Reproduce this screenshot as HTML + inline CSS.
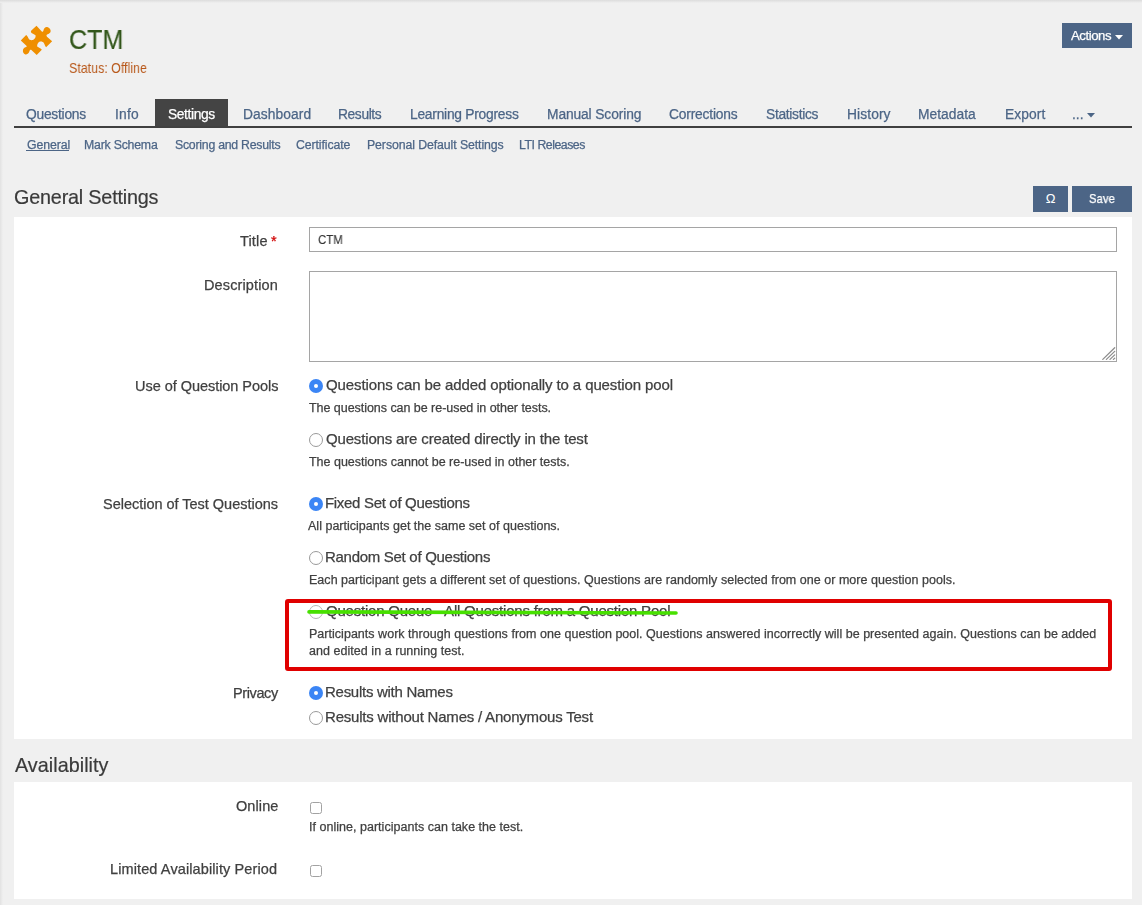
<!DOCTYPE html>
<html><head><meta charset="utf-8">
<style>
html,body{margin:0;padding:0}
body{width:1142px;height:905px;overflow:hidden;background:#f0f0f0;position:relative;font-family:"Liberation Sans",sans-serif}
.a{position:absolute}
.t{position:absolute;white-space:nowrap;will-change:transform;font-family:"Liberation Sans",sans-serif;-webkit-text-stroke:0.25px currentColor}
.t i{display:inline-block;width:0;height:0}
.btn{position:absolute;background:#4c6586}
.radio{position:absolute;width:12px;height:12px;border:1px solid #9a9a9a;border-radius:50%;background:#fff}
.radio.on{width:14px;height:14px;border:0;background:#3b85f5}
.radio.on:after{content:"";position:absolute;left:5px;top:5px;width:4px;height:4px;border-radius:50%;background:#fff}
.cb{position:absolute;width:10px;height:10px;border:1px solid #a2a2a2;border-radius:2.5px;background:#fff}
</style></head><body>
<!-- inner shadows -->
<div class="a" style="left:0;top:0;width:3px;height:905px;background:linear-gradient(90deg,#e2e2e2,#f0f0f0)"></div>
<div class="a" style="left:0;top:0;width:1142px;height:3px;background:linear-gradient(#dcdcdc,#f0f0f0)"></div>
<!-- puzzle icon -->
<svg class="a" style="left:18px;top:22px" width="38" height="36" viewBox="0 0 38 36">
<path fill="#ef8f00" d="M18.50 3.78 L23.80 9.47 Q24.87 10.43 25.47 8.56 C25.87 5.97 27.46 4.70 29.05 4.97 C31.44 5.57 33.43 7.96 32.43 10.15 C31.64 11.54 30.04 11.94 28.97 12.42 Q27.86 13.33 28.97 14.64 L34.14 19.30 L28.05 25.15 C27.06 23.88 26.66 22.28 25.87 20.89 C24.67 19.10 21.69 18.70 20.10 20.89 C19.10 22.28 18.90 23.88 19.50 24.87 C21.49 25.87 22.88 26.66 23.80 27.66 L18.70 32.95 L13.13 27.86 Q11.94 27.46 11.54 29.05 C10.94 31.44 9.15 32.63 7.36 32.43 C5.57 31.83 4.58 30.24 4.97 27.86 C5.37 26.26 7.16 25.47 8.56 24.87 Q9.15 24.27 8.16 23.48 L2.79 18.50 L8.16 13.05 C9.55 13.93 9.95 15.52 10.74 16.71 C11.94 18.70 15.52 18.70 16.91 16.32 C17.71 15.12 17.71 13.73 17.51 13.13 C15.92 11.94 13.93 11.34 13.13 10.43 Q12.53 9.55 13.33 8.56 Z"/>
</svg>
<!-- actions button -->
<div class="btn" style="left:1062px;top:23px;width:70px;height:25px"></div>
<svg class="a" style="left:1115px;top:35px" width="8" height="5"><path d="M0 0H8L4 4.5Z" fill="#fff"/></svg>
<!-- tabs -->
<div class="a" style="left:155px;top:99px;width:73px;height:28px;background:#444"></div>
<div class="a" style="left:14px;top:126px;width:1118px;height:2px;background:#404040"></div>
<svg class="a" style="left:1087px;top:113px" width="8" height="5"><path d="M0 0H8L4 4.5Z" fill="#4c6586"/></svg>
<div class="a" style="left:26px;top:150px;width:43px;height:1px;background:#4c6586"></div>
<!-- omega / save -->
<div class="btn" style="left:1033px;top:186px;width:35px;height:26px"></div>
<div class="btn" style="left:1072px;top:186px;width:60px;height:26px"></div>
<div class="a" style="left:1033px;top:186px;width:35px;height:26px;color:#fff;font-size:13px;line-height:26px;text-align:center">&#937;</div>
<!-- panels -->
<div class="a" style="left:14px;top:217px;width:1118px;height:522px;background:#fff"></div>
<div class="a" style="left:14px;top:782px;width:1118px;height:117px;background:#fff"></div>
<!-- input/textarea -->
<div class="a" style="left:309px;top:227px;width:806px;height:23px;border:1px solid #a5a5a5;background:#fff"></div>
<div class="a" style="left:309px;top:271px;width:806px;height:89px;border:1px solid #a5a5a5;background:#fff"></div>
<svg class="a" style="left:1102px;top:347px" width="14" height="14"><path d="M0.8 12.4L12.7 0.7M4.4 12.4L12.7 4.4M8 12.4L12.7 7.9M11.4 12.4L12.7 11.2" stroke="#8c8c8c" stroke-width="1.25" stroke-linecap="round"/></svg>
<!-- radios -->
<div class="radio on" style="left:309px;top:379px"></div>
<div class="radio" style="left:309px;top:433px"></div>
<div class="radio on" style="left:309px;top:497px"></div>
<div class="radio" style="left:309px;top:551px"></div>
<div class="radio" style="left:309px;top:605px;border-color:#b5b5b5"></div>
<div class="radio on" style="left:309px;top:686px"></div>
<div class="radio" style="left:309px;top:711px"></div>
<!-- checkboxes -->
<div class="cb" style="left:310px;top:802px"></div>
<div class="cb" style="left:310px;top:865px"></div>
<div class="t" style="left:68.88px;top:23.20px;font-size:27.4px;line-height:33px;color:#32561a;letter-spacing:0.000px;-webkit-text-stroke:0.2px;transform:scaleX(0.9166);transform-origin:0 0;">CTM</div>
<div class="t" style="left:69.30px;top:60.20px;font-size:14.2px;line-height:17px;color:#b8581a;letter-spacing:0.000px;-webkit-text-stroke:0;transform:scaleX(0.8768);transform-origin:0 0;">Status: Offline</div>
<div class="t" style="left:26.40px;top:106.21px;font-size:13.8px;line-height:17px;color:#4c6586;letter-spacing:-0.240px;">Questions</div>
<div class="t" style="left:114.70px;top:106.21px;font-size:13.8px;line-height:17px;color:#4c6586;letter-spacing:0.187px;">Info</div>
<div class="t" style="left:242.70px;top:106.21px;font-size:13.8px;line-height:17px;color:#4c6586;letter-spacing:0.072px;">Dashboard</div>
<div class="t" style="left:338.00px;top:106.21px;font-size:13.8px;line-height:17px;color:#4c6586;letter-spacing:-0.384px;">Results</div>
<div class="t" style="left:409.50px;top:106.21px;font-size:13.8px;line-height:17px;color:#4c6586;letter-spacing:-0.246px;">Learning Progress</div>
<div class="t" style="left:546.60px;top:106.21px;font-size:13.8px;line-height:17px;color:#4c6586;letter-spacing:-0.115px;">Manual Scoring</div>
<div class="t" style="left:669.20px;top:106.21px;font-size:13.8px;line-height:17px;color:#4c6586;letter-spacing:-0.184px;">Corrections</div>
<div class="t" style="left:766.40px;top:106.21px;font-size:13.8px;line-height:17px;color:#4c6586;letter-spacing:-0.300px;">Statistics</div>
<div class="t" style="left:847.40px;top:106.21px;font-size:13.8px;line-height:17px;color:#4c6586;letter-spacing:0.095px;">History</div>
<div class="t" style="left:918.30px;top:106.21px;font-size:13.8px;line-height:17px;color:#4c6586;letter-spacing:0.021px;">Metadata</div>
<div class="t" style="left:1004.50px;top:106.21px;font-size:13.8px;line-height:17px;color:#4c6586;letter-spacing:0.072px;">Export</div>
<div class="t" style="left:1072.00px;top:106.21px;font-size:13.8px;line-height:17px;color:#4c6586;letter-spacing:0.017px;">...</div>
<div class="t" style="left:167.60px;top:106.21px;font-size:13.8px;line-height:17px;color:#ffffff;letter-spacing:-0.379px;">Settings</div>
<div class="t" style="left:26.50px;top:137.60px;font-size:12.3px;line-height:15px;color:#4c6586;letter-spacing:-0.103px;">General</div>
<div class="t" style="left:83.90px;top:137.60px;font-size:12.3px;line-height:15px;color:#4c6586;letter-spacing:-0.211px;">Mark Schema</div>
<div class="t" style="left:174.50px;top:137.60px;font-size:12.3px;line-height:15px;color:#4c6586;letter-spacing:-0.244px;">Scoring and Results</div>
<div class="t" style="left:296.30px;top:137.60px;font-size:12.3px;line-height:15px;color:#4c6586;letter-spacing:-0.092px;">Certificate</div>
<div class="t" style="left:366.70px;top:137.60px;font-size:12.3px;line-height:15px;color:#4c6586;letter-spacing:-0.084px;">Personal Default Settings</div>
<div class="t" style="left:518.60px;top:137.60px;font-size:12.3px;line-height:15px;color:#4c6586;letter-spacing:-0.472px;">LTI Releases</div>
<div class="t" style="left:13.70px;top:184.80px;font-size:19.8px;line-height:24px;color:#3a3a3a;letter-spacing:-0.190px;-webkit-text-stroke:0.2px;">General Settings</div>
<div class="t" style="left:14.50px;top:752.51px;font-size:19.8px;line-height:24px;color:#3a3a3a;letter-spacing:0.027px;-webkit-text-stroke:0.2px;">Availability</div>
<div class="t" style="left:1071.00px;top:28.00px;font-size:13.2px;line-height:16px;color:#ffffff;letter-spacing:-0.442px;">Actions</div>
<div class="t" style="left:1089.00px;top:191.11px;font-size:12.9px;line-height:15px;color:#ffffff;letter-spacing:0.000px;transform:scaleX(0.8798);transform-origin:0 0;">Save</div>
<div class="t" style="left:240.20px;top:233.00px;font-size:14.5px;line-height:17px;color:#404040;letter-spacing:0.152px;">Title</div>
<div class="t" style="left:271.40px;top:233.00px;font-size:14.5px;line-height:17px;color:#d00000;letter-spacing:0.000px;">*</div>
<div class="t" style="left:204.30px;top:277.00px;font-size:14.5px;line-height:17px;color:#404040;letter-spacing:0.124px;">Description</div>
<div class="t" style="left:134.80px;top:377.80px;font-size:14.5px;line-height:17px;color:#404040;letter-spacing:-0.041px;">Use of Question Pools</div>
<div class="t" style="left:103.00px;top:496.30px;font-size:14.5px;line-height:17px;color:#404040;letter-spacing:-0.018px;">Selection of Test Questions</div>
<div class="t" style="left:232.60px;top:684.80px;font-size:14.5px;line-height:17px;color:#404040;letter-spacing:-0.398px;">Privacy</div>
<div class="t" style="left:235.70px;top:798.41px;font-size:14.5px;line-height:17px;color:#404040;letter-spacing:0.090px;">Online</div>
<div class="t" style="left:110.40px;top:860.71px;font-size:14.5px;line-height:17px;color:#404040;letter-spacing:0.112px;">Limited Availability Period</div>
<div class="t" style="left:317.90px;top:232.00px;font-size:13.2px;line-height:16px;color:#333;letter-spacing:0.000px;-webkit-text-stroke:0.1px;transform:scaleX(0.8702);transform-origin:0 0;">CTM</div>
<div class="t" style="left:326.30px;top:375.91px;font-size:15px;line-height:18px;color:#404040;letter-spacing:-0.112px;">Questions can be added optionally to a question pool</div>
<div class="t" style="left:326.30px;top:429.91px;font-size:15px;line-height:18px;color:#404040;letter-spacing:-0.161px;">Questions are created directly in the test</div>
<div class="t" style="left:325.30px;top:493.91px;font-size:15px;line-height:18px;color:#404040;letter-spacing:-0.316px;">Fixed Set of Questions</div>
<div class="t" style="left:325.30px;top:547.91px;font-size:15px;line-height:18px;color:#404040;letter-spacing:-0.289px;">Random Set of Questions</div>
<div class="t" style="left:326.30px;top:601.80px;font-size:15px;line-height:18px;color:#404040;letter-spacing:-0.214px;">Question Queue - All Questions from a Question Pool</div>
<div class="t" style="left:325.30px;top:682.61px;font-size:15px;line-height:18px;color:#404040;letter-spacing:-0.273px;">Results with Names</div>
<div class="t" style="left:325.30px;top:707.80px;font-size:15px;line-height:18px;color:#404040;letter-spacing:-0.206px;">Results without Names / Anonymous Test</div>
<div class="t" style="left:308.80px;top:400.80px;font-size:12.5px;line-height:15px;color:#404040;letter-spacing:-0.042px;">The questions can be re-used in other tests.</div>
<div class="t" style="left:308.80px;top:454.91px;font-size:12.5px;line-height:15px;color:#404040;letter-spacing:-0.013px;">The questions cannot be re-used in other tests.</div>
<div class="t" style="left:308.40px;top:518.91px;font-size:12.5px;line-height:15px;color:#404040;letter-spacing:0.012px;">All participants get the same set of questions.</div>
<div class="t" style="left:308.50px;top:572.91px;font-size:12.5px;line-height:15px;color:#404040;letter-spacing:0.029px;">Each participant gets a different set of questions. Questions are randomly selected from one or more question pools.</div>
<div class="t" style="left:308.50px;top:626.80px;font-size:12.5px;line-height:15px;color:#404040;letter-spacing:0.025px;">Participants work through questions from one question pool. Questions answered incorrectly will be presented again. Questions can be added</div>
<div class="t" style="left:309.00px;top:643.61px;font-size:12.5px;line-height:15px;color:#404040;letter-spacing:0.043px;">and edited in a running test.</div>
<div class="t" style="left:308.60px;top:820.00px;font-size:12.5px;line-height:15px;color:#404040;letter-spacing:0.023px;">If online, participants can take the test.</div>
<!-- red box -->
<div class="a" style="left:285px;top:599px;width:819px;height:64px;border:4px solid #e00000;border-radius:3px"></div>
<!-- green line -->
<svg class="a" style="left:300px;top:600px" width="390" height="25"><path d="M9 11.9 L376 13" stroke="#47e000" stroke-width="3.6" stroke-linecap="round" fill="none"/></svg>
</body></html>
